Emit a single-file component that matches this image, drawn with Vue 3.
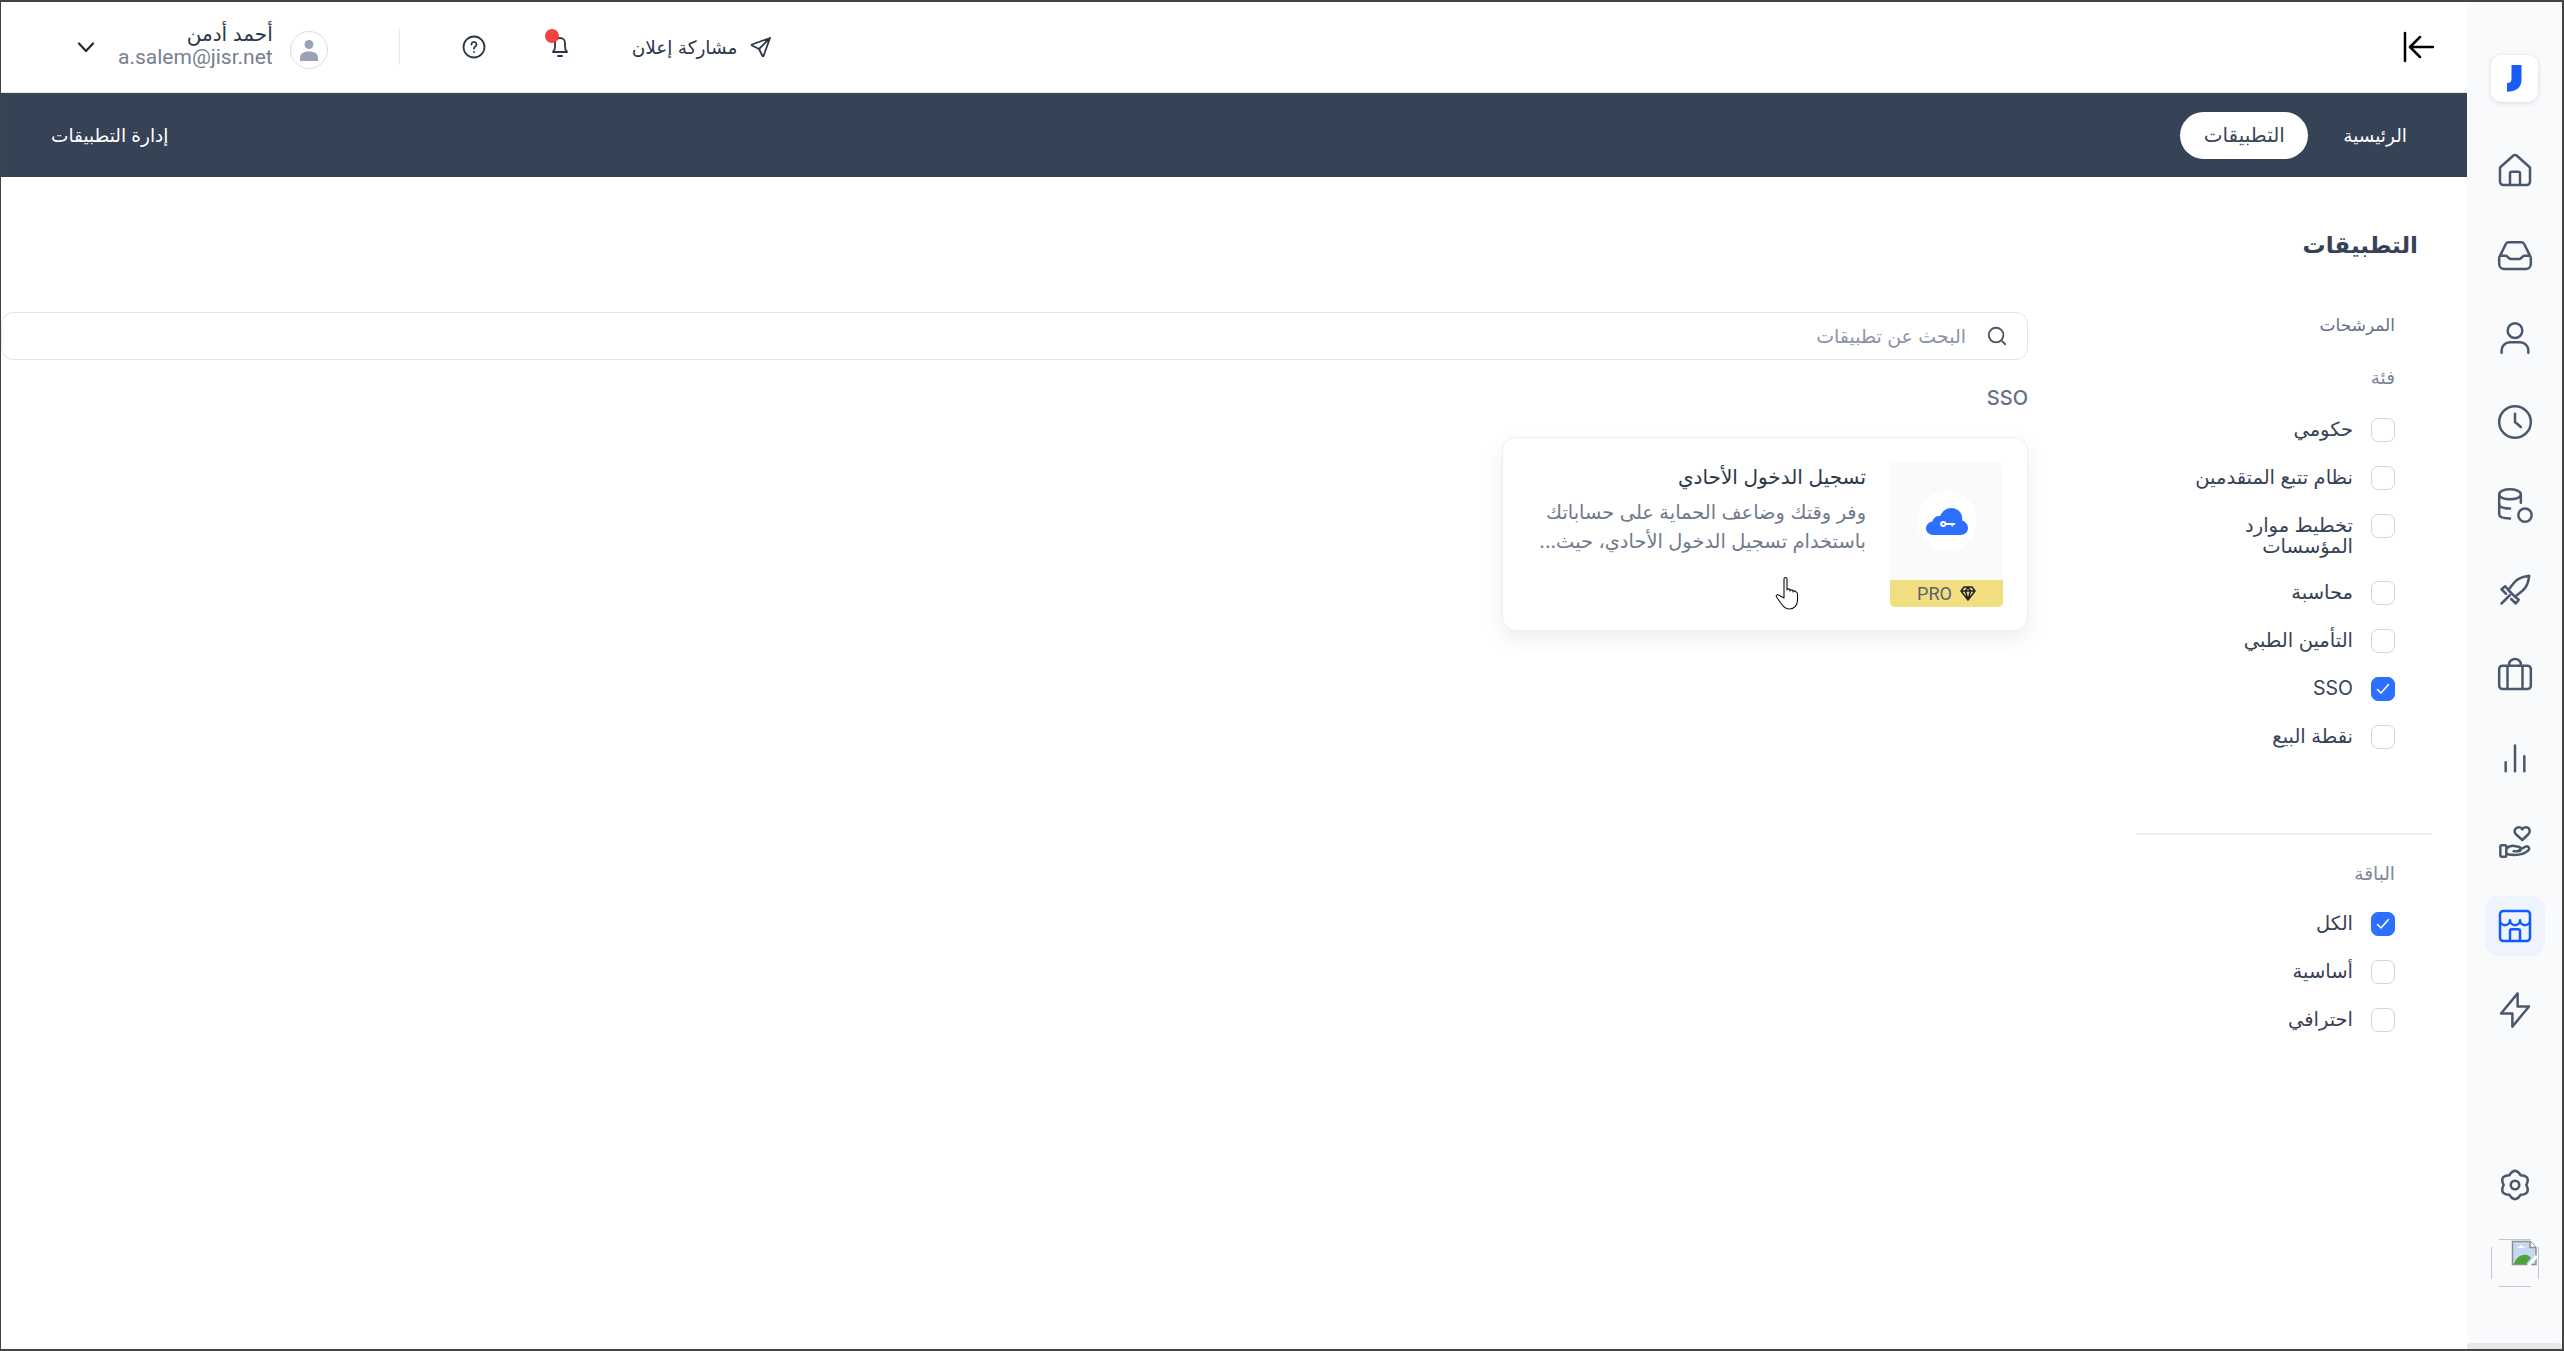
<script setup>
const sideIcons = [
  { name: 'home', size: 40, d: 'M3 10.500 10.700 3.600a2 2 0 0 1 2.600 0L21 10.500V19a2 2 0 0 1-2 2H5a2 2 0 0 1-2-2zM9 21v-7a1 1 0 0 1 1-1h4a1 1 0 0 1 1 1v7' },
  { name: 'inbox', size: 40, d: 'M2.500 14.500V18a3 3 0 0 0 3 3h13a3 3 0 0 0 3-3v-3.500a2 2 0 0 0-.4-1.200L17.500 6a2 2 0 0 0-1.700-1H8.200a2 2 0 0 0-1.700 1L2.900 13.300a2 2 0 0 0-.4 1.200zM3 13h3.500c1 0 1.500 2 3 2h5c1.500 0 2-2 3-2H21' },
  { name: 'user', size: 40, d: 'M7.600 7.600a4.400 4.400 0 1 0 8.800 0a4.400 4.400 0 1 0-8.800 0M4 20.800v-1.300a5 5 0 0 1 5-5h6a5 5 0 0 1 5 5v1.300' },
  { name: 'clock', size: 40, d: 'M2.500 12a9.500 9.500 0 1 0 19 0a9.500 9.500 0 1 0-19 0M12 7v5l3.500 3' },
  { name: 'db', size: 40, d: 'M2.500 5c0-4 13-4 13 0s-13 4-13 0zM2.500 5v12c0 1.500 2.500 2.500 6.500 2.500M2.500 11c0 1.500 2.500 2.500 6.500 2.500M15.500 5v5M14 17.500a4 4 0 1 0 8 0a4 4 0 1 0-8 0' },
  { name: 'rocket', size: 36, d: 'M21.500 2.500c-4.500.5-8 2-10 4.500l-4 5 4.500 4.500 5-4c2.500-2 4-5.500 4.500-10zM7.500 12l-2-2.500-2.500 2 3 3M12 16.500l2.500 2-2 2.500-3-3M8.500 15.500 3 21' },
  { name: 'case', size: 40, d: 'M2.500 9a2 2 0 0 1 2-2h15a2 2 0 0 1 2 2v10a2 2 0 0 1-2 2h-15a2 2 0 0 1-2-2zM7.500 7v14M16.500 7v14M8.500 7V6a3.500 3 0 0 1 7 0v1' },
  { name: 'chart', size: 40, d: 'M6.400 14.500V20M12 4.500V20M17.600 11V20' },
  { name: 'hand', size: 32, d: 'M1 15.500a1 1 0 0 1 1-1h2.500a1 1 0 0 1 1 1v6.500a1 1 0 0 1-1 1H2a1 1 0 0 1-1-1zM5.500 17c2-2 4-2.500 6-2l3 .5a1.500 1.500 0 0 1 0 3.500h-3.500M15 18l5-2.500c2-1 3.500 1.500 1.800 3-4 3.500-9 4-16.300 2.500M17.500 10.500l-4.800-4.300C10.500 3.500 12.500 1 15 1c1 0 2 .6 2.500 1.500C18 1.600 19 1 20 1c2.500 0 4.200 2.500 2 5.200z' },
  { name: 'store', size: 40, active: true, d: 'M3 5a2 2 0 0 1 2-2h14a2 2 0 0 1 2 2v14a2 2 0 0 1-2 2H5a2 2 0 0 1-2-2zM3 8.500a3 3 0 0 0 6 0a3 3 0 0 0 6 0a3 3 0 0 0 6 0M9 21v-6a1 1 0 0 1 1-1h4a1 1 0 0 1 1 1v6' },
  { name: 'bolt', size: 42, d: 'M13.500 2.500V10H20L10.500 21.500V14H4z' },
]
const gearPath = 'M8 5.070Q12 -1 16 5.070Q23.260 5.500 20 12Q23.260 18.500 16 18.930Q12 25 8 18.930Q.74 18.500 4 12Q.74 5.500 8 5.070zM9 12a3 3 0 1 0 6 0a3 3 0 1 0-6 0'

const categories = [
  { label: 'حكومي' },
  { label: 'نظام تتبع المتقدمين' },
  { label: 'تخطيط موارد المؤسسات' },
  { label: 'محاسبة' },
  { label: 'التأمين الطبي' },
  { label: 'SSO', on: true },
  { label: 'نقطة البيع' },
]
const plans = [
  { label: 'الكل', on: true },
  { label: 'أساسية' },
  { label: 'احترافي' },
]
</script>

<template>
  <div class="frame" dir="rtl">
    <aside class="side">
      <div class="logo">
        <svg width="15" height="27" viewBox="0 0 15 27"><path fill="#1a5cf5" d="M4.500 0H14.500V15C14.500 22 10 26.700 0 26.700V18C3 18 4.500 16.500 4.500 14Z" /></svg>
      </div>
      <div v-for="item in sideIcons" :key="item.name" class="side-item" :class="{ active: item.active }">
        <svg :width="item.size" :height="item.size" viewBox="0 0 24 24" fill="none" stroke="currentColor" :stroke-width="60 / item.size" stroke-linecap="round" stroke-linejoin="round"><path :d="item.d" /></svg>
      </div>
      <div class="side-bottom">
        <div class="side-item">
          <svg width="34" height="34" viewBox="0 0 24 24" fill="none" stroke="currentColor" stroke-width="1.800" stroke-linecap="round" stroke-linejoin="round"><path :d="gearPath" /></svg>
        </div>
        <svg class="broken" width="48" height="48" viewBox="0 0 48 48" fill="none">
          <path d="M8 .5H40M8 47.500H40M.5 8V40M47.500 8V40" stroke="#c4c6c9" />
          <path d="M21.500 2.500H39L45 8.500V25.500H21.500z" fill="#c5d9f5" stroke="#8f8f8f" stroke-width="1.500" />
          <path d="M39 2.500V8.500H45" fill="#fff" stroke="#8f8f8f" stroke-width="1.500" />
          <path d="M23 25c2-7 8-10 13-9 2 .4 3 2 4 3l-5 6z" fill="#4ea33a" />
          <path d="M26 9l4-3 4 3z" fill="#fff" />
          <path d="M37 27 46 17" stroke="#fff" stroke-width="3" />
        </svg>
      </div>
      <div class="side-scroll"></div>
    </aside>

    <div class="page">
      <header class="top">
        <svg width="32" height="32" viewBox="0 0 32 32" fill="none" stroke="#000" stroke-width="2.500" stroke-linecap="round" stroke-linejoin="round"><path d="M3 2V30M31 16H9M18 6 8 16 18 26" /></svg>
        <div class="top-tools">
          <div class="share">
            <svg width="24" height="24" viewBox="0 0 24 24" fill="none" stroke="#2b3648" stroke-width="1.800" stroke-linecap="round" stroke-linejoin="round"><path d="M10 14 21 3M21 3 14.500 21a.55.55 0 0 1-1 0L10 14 3 10.500a.55.55 0 0 1 0-1z" /></svg>
            <span>مشاركة إعلان</span>
          </div>
          <div class="bell">
            <svg width="24" height="24" viewBox="0 0 24 24" fill="none" stroke="#2b3648" stroke-width="1.800" stroke-linecap="round" stroke-linejoin="round"><path d="M12 3a5 5 0 0 0-5 5v4c0 2-1 4-2 5h14c-1-1-2-3-2-5V8a5 5 0 0 0-5-5zM10 21h4" /></svg>
            <i class="dot"></i>
          </div>
          <svg class="help" width="24" height="24" viewBox="0 0 24 24" fill="none" stroke="#2b3648" stroke-width="1.800" stroke-linecap="round" stroke-linejoin="round"><path d="M1.500 12a10.500 10.500 0 1 0 21 0a10.500 10.500 0 1 0-21 0M9.500 9.500a2.500 2.500 0 1 1 3.800 2.100c-.8.500-1.300 1-1.300 2M12 17v.1" /></svg>
          <span class="vline"></span>
          <div class="avatar">
            <svg width="22" height="24" viewBox="0 0 22 24" fill="#9aa3b5"><path d="M6.500 6.500a4.500 4.500 0 1 0 9 0a4.500 4.500 0 1 0-9 0zM2 23v-3c0-4 3-6.500 9-6.500s9 2.500 9 6.500v3z" /></svg>
          </div>
          <div class="who">
            <div class="who-name">أحمد أدمن</div>
            <div class="who-mail">a.salem@jisr.net</div>
          </div>
          <svg class="chev" width="24" height="24" viewBox="0 0 24 24" fill="none" stroke="#1f2937" stroke-width="2.200" stroke-linecap="round" stroke-linejoin="round"><path d="M5 8.500 12 16 19 8.500" /></svg>
        </div>
      </header>

      <nav class="nav">
        <span class="nav-link">الرئيسية</span>
        <span class="nav-pill">التطبيقات</span>
        <span class="nav-end">إدارة التطبيقات</span>
      </nav>

      <h1 class="title">التطبيقات</h1>

      <div class="content">
        <section class="filters">
          <div class="filter-head">المرشحات</div>
          <div class="filter-sub">فئة</div>
          <div class="rows">
            <label v-for="c in categories" :key="c.label" class="row">
              <span class="box" :class="{ on: c.on }">
                <svg v-if="c.on" width="14" height="12" viewBox="0 0 14 12" fill="none" stroke="#fff" stroke-width="1.600" stroke-linecap="round" stroke-linejoin="round"><path d="M1.500 6.500 5 10 12.500 1.500" /></svg>
              </span>
              <span class="row-text">{{ c.label }}</span>
            </label>
          </div>
          <div class="rule"></div>
          <div class="filter-sub plan">الباقة</div>
          <div class="rows">
            <label v-for="p in plans" :key="p.label" class="row">
              <span class="box" :class="{ on: p.on }">
                <svg v-if="p.on" width="14" height="12" viewBox="0 0 14 12" fill="none" stroke="#fff" stroke-width="1.600" stroke-linecap="round" stroke-linejoin="round"><path d="M1.500 6.500 5 10 12.500 1.500" /></svg>
              </span>
              <span class="row-text">{{ p.label }}</span>
            </label>
          </div>
        </section>

        <section class="results">
          <div class="search">
            <svg width="22" height="22" viewBox="0 0 24 24" fill="none" stroke="#4b5563" stroke-width="2" stroke-linecap="round"><path d="M3 11a8 8 0 1 0 16 0a8 8 0 1 0-16 0M21 21l-4.300-4.300" /></svg>
            <span>البحث عن تطبيقات</span>
          </div>
          <div class="group-name">SSO</div>
          <article class="card">
            <div class="thumb">
              <div class="thumb-top">
                <div class="circle">
                  <svg width="42" height="27" viewBox="0 0 40 27" preserveAspectRatio="none"><path fill="#2d6fff" d="M7 27C3 27 0 24 0 20.500 0 17 2.500 14 6 13.500 7 9.500 10 7.500 13.500 8 15.500 3 19.500 0 24 0c6 0 10.500 4.500 10.500 10.500v2C37.500 13.500 40 16.500 40 20c0 4-3 7-7 7z" /><path fill="none" stroke="#fff" stroke-width="2" stroke-linecap="round" d="M19 16h8M25 16v1.500M14.500 16a2 2 0 1 0 4 0a2 2 0 1 0-4 0" /></svg>
                </div>
              </div>
              <div class="pro">
                <svg width="16" height="15" viewBox="0 0 16 15" fill="none" stroke="#222" stroke-width="1.500" stroke-linejoin="round"><path d="M4 1h8l3 4-7 9-7-9zM1 5h14M5.500 5 8 14l2.500-9L8 1z" /></svg>
                <span>PRO</span>
              </div>
            </div>
            <div class="card-body">
              <h3>تسجيل الدخول الأحادي</h3>
              <p>وفر وقتك وضاعف الحماية على حساباتك باستخدام تسجيل الدخول الأحادي، حيث...</p>
            </div>
            <svg class="pointer" width="24" height="33" viewBox="0 0 24 33" fill="#fff" stroke="#111" stroke-width="1.100" stroke-linejoin="round"><path d="M9 2c0-2 3-2 3 0v11c0-1.500 3-1.500 3 0v1c0-1.500 3-1.500 3 0v1c0-1.500 3-1.500 3 0 1 0 1.500 1 1.500 2v6c0 5-3 9-8 9-4 0-6-2-8-5l-5-7c-1-2 1.500-3 3-1.500L9 21z" /></svg>
          </article>
        </section>
      </div>
    </div>
  </div>
</template>

<style>
html, body { margin: 0; background: #fff; }
</style>

<style scoped>
.frame {
  box-sizing: border-box;
  height: 100vh;
  display: flex;
  overflow: hidden;
  border: 2px solid #444;
  border-left-width: 1px;
  background: #fff;
  color: #2b3648;
  font-family: "Inter", "DejaVu Sans", sans-serif;
}
.side {
  width: 95px;
  flex: none;
  background: #f9fafc;
  display: flex;
  flex-direction: column;
  align-items: center;
  padding-top: 53px;
  position: relative;
  color: #4a586e;
}
.logo {
  width: 47px;
  height: 47px;
  border-radius: 10px;
  background: #fff;
  box-shadow: 0 1px 5px rgba(30, 40, 70, 0.16);
  display: flex;
  align-items: center;
  justify-content: center;
  margin-bottom: 14px;
}
.side-item {
  width: 60px;
  height: 60px;
  border-radius: 14px;
  display: flex;
  align-items: center;
  justify-content: center;
  margin-top: 24px;
}
.side-item.active { background: #eff3fd; color: #0f5bff; }
.side-bottom {
  margin-top: auto;
  margin-bottom: 62px;
  display: flex;
  flex-direction: column;
  align-items: center;
}
.broken { margin-top: 24px; }
.side-scroll {
  position: absolute;
  left: 0;
  right: 0;
  bottom: 0;
  height: 6px;
  border-radius: 4px 4px 0 0;
  background: #e6e8ec;
}
.page { flex: 1; min-width: 0; display: flex; flex-direction: column; }
.top {
  height: 91px;
  flex: none;
  box-sizing: border-box;
  border-bottom: 1px solid #e8e9ec;
  display: flex;
  align-items: center;
  justify-content: space-between;
  padding: 0 33px 0 73px;
}
.top-tools { display: flex; align-items: center; }
.share { display: flex; align-items: center; gap: 12px; font-size: 18.500px; color: #2b3648; }
.bell { position: relative; margin-right: 60px; height: 24px; }
.dot {
  position: absolute;
  top: -6px;
  right: 13px;
  width: 14px;
  height: 14px;
  border-radius: 50%;
  background: #f1423d;
}
.help { margin-right: 62px; }
.vline { width: 1px; height: 36px; background: #e7e8ec; margin-right: 62px; }
.avatar {
  width: 38px;
  height: 38px;
  box-sizing: border-box;
  border: 1px solid #d8dbe3;
  border-radius: 50%;
  display: flex;
  align-items: center;
  justify-content: center;
  margin: 6px 71px 0 0;
}
.who { margin: -4px 17px 0 0; }
.who-name { font-size: 20px; line-height: 24px; color: #2b3648; text-align: right; }
.who-mail { font-family: "Roboto", sans-serif; font-size: 21px; line-height: 23px; color: #77808f; direction: ltr; text-align: right; }
.chev { margin-right: 20px; }
.nav {
  height: 84px;
  flex: none;
  background: #364256;
  display: flex;
  align-items: center;
  padding: 0 60px 0 50px;
  color: #fff;
  font-size: 18.500px;
}
.nav-pill {
  width: 128px;
  height: 47px;
  margin-right: 35px;
  border-radius: 24px;
  background: #fff;
  color: #3a4659;
  font-size: 20px;
  display: flex;
  align-items: center;
  justify-content: center;
}
.nav-end { margin-right: auto; }
.title {
  margin: 48px 49px 0 0;
  font-size: 23px;
  line-height: 40px;
  font-weight: 600;
  color: #364256;
}
.content { display: flex; gap: 108px; margin-top: 47px; }
.filters { width: 296px; margin-right: 35px; flex: none; }
.filter-head { font-size: 17px; line-height: 26px; color: #667085; padding-right: 37px; }
.filter-sub { font-size: 18.500px; line-height: 26px; color: #7d8696; padding-right: 37px; margin-top: 26px; }
.filter-sub.plan { margin-top: 25px; }
.rows { display: flex; flex-direction: column; gap: 24px; padding-right: 37px; margin-top: 28px; }
.plan + .rows { margin-top: 26px; }
.row { display: flex; gap: 18px; align-items: flex-start; }
.box {
  width: 24px;
  height: 24px;
  flex: none;
  box-sizing: border-box;
  border: 1px solid #d0d4de;
  border-radius: 7px;
  display: flex;
  align-items: center;
  justify-content: center;
  background: #fff;
}
.box.on { background: #2d6fff; border-color: #2d6fff; }
.row-text { font-size: 19.500px; line-height: 21px; padding-top: 1px; width: 170px; flex: none; color: #364256; }
.rule { height: 2px; background: #eeeff3; margin-top: 84px; }
.results { flex: 1; min-width: 0; }
.search {
  height: 48px;
  box-sizing: border-box;
  border: 1px solid #e2e4ea;
  border-radius: 12px;
  display: flex;
  align-items: center;
  gap: 20px;
  padding-right: 19px;
  font-size: 19px;
  color: #8b94a3;
}
.group-name { margin-top: 25px; font-size: 20px; line-height: 26px; font-weight: 500; color: #667085; }
.card {
  position: relative;
  width: 526px;
  height: 194px;
  margin-top: 26px;
  box-sizing: border-box;
  border: 1px solid #eceef2;
  border-radius: 14px;
  box-shadow: 0 8px 20px rgba(30, 40, 70, 0.08);
  padding: 24px 24px 0 0;
  display: flex;
  gap: 24px;
  background: #fff;
}
.thumb {
  width: 113px;
  height: 145px;
  flex: none;
  border-radius: 5px;
  overflow: hidden;
  display: flex;
  flex-direction: column;
  background: #f9fafc;
}
.thumb-top { flex: 1; display: flex; align-items: center; justify-content: center; }
.circle {
  width: 60px;
  height: 60px;
  border-radius: 50%;
  background: #fff;
  display: flex;
  align-items: center;
  justify-content: center;
}
.pro {
  height: 27px;
  background: #f1de80;
  display: flex;
  align-items: center;
  justify-content: center;
  gap: 8px;
  font-family: "Roboto", sans-serif;
  font-size: 18px;
  color: #5a6270;
}
.card-body { width: 345px; }
.card-body h3 { margin: 1px 0 0; font-size: 20px; line-height: 28px; font-weight: 400; color: #2b3648; }
.card-body p { margin: 7px 0 0; font-size: 19.400px; line-height: 29px; color: #717a8c; }
.pointer { position: absolute; left: 272px; top: 139px; }
</style>
